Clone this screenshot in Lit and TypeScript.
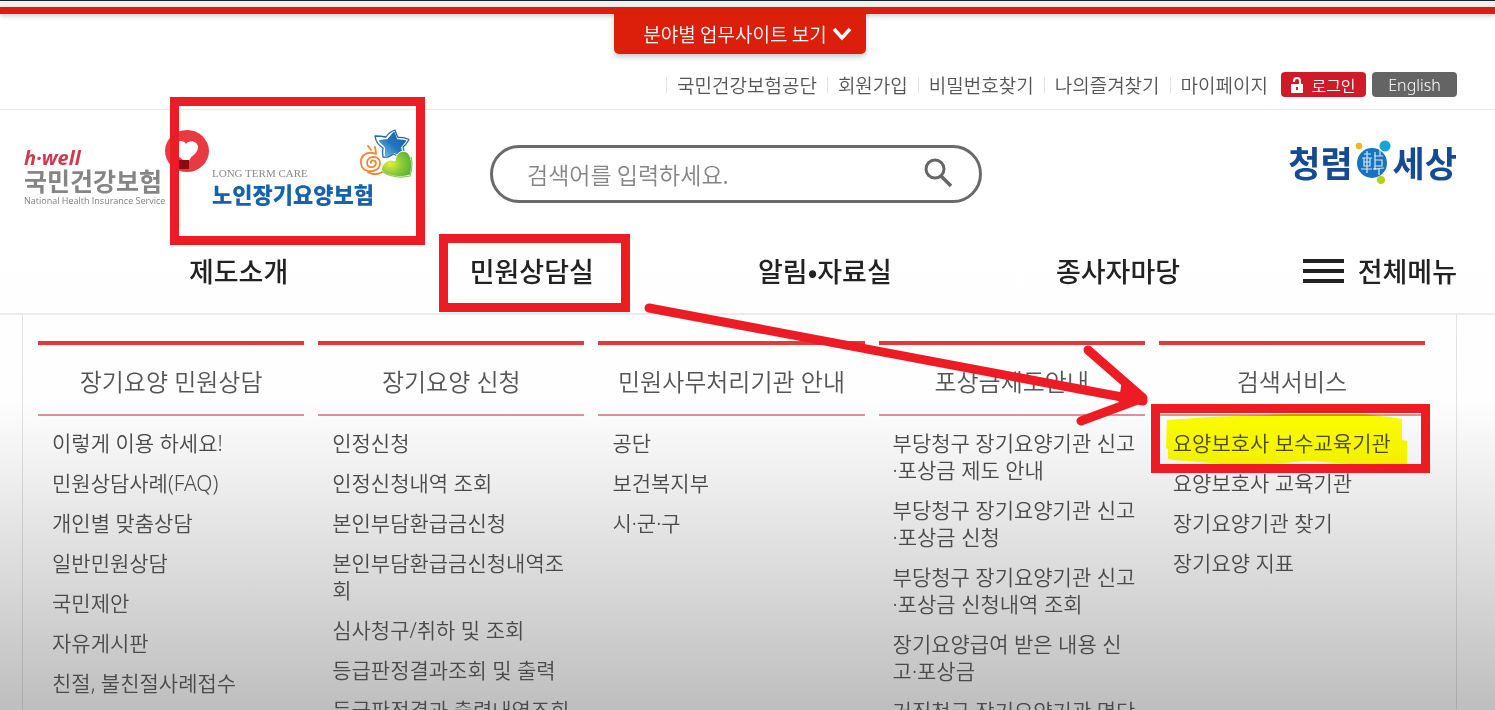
import { LitElement, html, css, svg } from "lit";
import { customElement } from "lit/decorators.js";

interface MenuColumn {
  title: string;
  items: string[];
}

const UTILITY = ["국민건강보험공단", "회원가입", "비밀번호찾기", "나의즐겨찾기", "마이페이지"];
const SECTIONS = ["제도소개", "민원상담실", "알림•자료실", "종사자마당"];
const COLUMNS: MenuColumn[] = [
  {
    title: "장기요양 민원상담",
    items: ["이렇게 이용 하세요!", "민원상담사례(FAQ)", "개인별 맞춤상담", "일반민원상담", "국민제안", "자유게시판", "친절, 불친절사례접수"],
  },
  {
    title: "장기요양 신청",
    items: ["인정신청", "인정신청내역 조회", "본인부담환급금신청", "본인부담환급금신청내역조회", "심사청구/취하 및 조회", "등급판정결과조회 및 출력", "등급판정결과 출력내역조회"],
  },
  { title: "민원사무처리기관 안내", items: ["공단", "보건복지부", "시·군·구"] },
  {
    title: "포상금제도안내",
    items: [
      "부당청구 장기요양기관 신고·포상금 제도 안내",
      "부당청구 장기요양기관 신고·포상금 신청",
      "부당청구 장기요양기관 신고·포상금 신청내역 조회",
      "장기요양급여 받은 내용 신고·포상금",
      "거짓청구 장기요양기관 명단",
    ],
  },
  {
    title: "검색서비스",
    items: ["요양보호사 보수교육기관", "요양보호사 교육기관", "장기요양기관 찾기", "장기요양 지표"],
  },
];

@customElement("brand-logos")
class BrandLogos extends LitElement {
  static styles = css`
    :host {
      display: block;
      align-self: start;
    }
    * {
      box-sizing: border-box;
    }
    .row,
    a {
      display: flex;
      align-items: flex-start;
    }
    a {
      color: inherit;
      text-decoration: none;
      white-space: nowrap;
    }
    .names {
      display: flex;
      flex-direction: column;
      width: 142px;
      padding: 22px 0 0 2px;
    }
    .hwell {
      font: italic 700 20px/18px "Open Sans", sans-serif;
      color: #cf3a4c;
    }
    .nhis {
      font-size: 25px;
      line-height: 26px;
      font-weight: 700;
      color: #858585;
    }
    .service {
      font: 9px/16px "Open Sans", sans-serif;
      color: #808080;
    }
    .heart {
      width: 46px;
      height: 44px;
      margin-top: 2px;
    }
    .care-names {
      display: flex;
      flex-direction: column;
      width: 149px;
      padding: 40px 0 0 2px;
    }
    .care-en {
      font: 11px/13px "Liberation Serif", serif;
      color: #8b8b8b;
    }
    .care-ko {
      font-size: 22px;
      line-height: 26px;
      font-weight: 900;
      color: #1763ab;
    }
    .star {
      width: 54px;
      height: 52px;
    }
  `;
  render() {
    return html`
      <div class="row">
        <a href="#">
          <span class="names">
            <span class="hwell">h·well</span>
            <span class="nhis">국민건강보험</span>
            <span class="service">National Health Insurance Service</span>
          </span>
          <svg class="heart" viewBox="0 0 46 44" aria-hidden="true">
            <ellipse cx="23" cy="22" rx="22" ry="21" fill="#ea3a41" />
            <path d="M20 32C16 28 11 26 11 18c0-7 9-8 11-3 3-5 12-3 12 3 0 7-7 8-9 14z" fill="#fff" />
            <path d="M15 31h10v9H15z" fill="#8d0a10" />
          </svg>
        </a>
        <a href="#">
          <span class="care-names">
            <span class="care-en">LONG TERM CARE</span>
            <span class="care-ko">노인장기요양보험</span>
          </span>
          <svg class="star" viewBox="0 0 54 52" aria-hidden="true">
            <defs>
              <linearGradient id="blue" x1="1" y1="0" x2="0" y2="1">
                <stop offset="0" stop-color="#1d62b0" />
                <stop offset="0.500" stop-color="#2374bf" />
                <stop offset="1" stop-color="#7cc4ee" />
              </linearGradient>
              <radialGradient id="green" cx="0.300" cy="0.500" r="0.700">
                <stop offset="0" stop-color="#e6ee3c" />
                <stop offset="0.500" stop-color="#8fcf3a" />
                <stop offset="1" stop-color="#5cb334" />
              </radialGradient>
            </defs>
            <path d="M36 3Q38 9 39 10.500 45 10 50 12.500 47 18 44 20 46 25 45 30 39 30 34 27 30 31 24 30 23 25 24 21 17 17 16 9 22 9 27 10 30 5 36 3z" fill="#fff" stroke="#2467ad" stroke-width="1.300" stroke-linejoin="round" />
            <path d="M35 6l2.500 7 8.500 1-5 6 2 8-8-3-8 4 0-9-6-6 8-1z" fill="url(#blue)" stroke="url(#blue)" stroke-width="2" stroke-linejoin="round" />
            <path d="M22 43C24 33 32 32 36 34c1-9 8-12 13-8 5 6 4 16 2 22-9 3-22 2-29-5z" fill="url(#green)" stroke="#fff" stroke-width="1" />
            <path d="M24 45c8 5 18 6 27 4 2-7 3-13 1-19" fill="none" stroke="#8cc152" stroke-width="1.200" />
            <g fill="none" stroke="#ee8633" stroke-width="1.800" stroke-linecap="round">
              <path d="M12 36c-1-3 4-4 5 0 0 5-9 6-9 0 0-8 13-8 13 0 0 9-13 11-18 4C-1 30 7 23 17 27" />
              <path d="M12 23l-3-4M17 26l-1-6M9 45c4 3 10 3 14 0" />
            </g>
          </svg>
        </a>
      </div>
    `;
  }
}

@customElement("marker-notes")
class MarkerNotes extends LitElement {
  static styles = css`
    .layer {
      position: absolute;
      top: 0;
      left: 0;
      width: 1495px;
      height: 710px;
      pointer-events: none;
    }
    .highlight {
      mix-blend-mode: multiply;
    }
  `;
  render() {
    const frames = [
      [174.5, 101.5, 246, 139],
      [443.5, 238.5, 182, 69],
      [1155.5, 408.5, 270, 60],
    ];
    return html`
      <svg class="layer" viewBox="0 0 1495 710" aria-hidden="true">
        <g fill="none" stroke="#ed1c24" stroke-width="9">
          ${frames.map(([x, y, w, h]) => svg`<rect x=${x} y=${y} width=${w} height=${h} />`)}
          <path d="M649 308L1143 401M1088 350L1143 398 1081 421" stroke-linecap="round" stroke-linejoin="round" />
          <path d="M1122 380L1140 397 1118 406z" fill="#ed1c24" stroke="none" />
        </g>
      </svg>
      <svg class="layer highlight" viewBox="0 0 1495 710" aria-hidden="true">
        <path
          d="M1167 420l42-3 84-3h70l26 3 13 2v21l5 1v25h-25l-74-5-52 4-32-1-50-4-6-1v-10l-2-1z"
          fill="#ff0"
        />
      </svg>
    `;
  }
}

@customElement("app-root")
class AppRoot extends LitElement {
  static styles = css`
    :host {
      display: block;
      position: relative;
      height: 100vh;
      overflow: hidden;
      background: linear-gradient(#fff 0, #fefefe 400px, #f0f0f0 470px, #d9d9d9 580px, #bebebe 710px);
      color: #555;
      font-family: "Noto Sans CJK KR", "Noto Sans", sans-serif;
      isolation: isolate;
    }
    * {
      box-sizing: border-box;
    }
    ul,
    h2 {
      margin: 0;
      padding: 0;
      list-style: none;
      font-weight: 350;
    }
    a {
      color: inherit;
      text-decoration: none;
    }
    button {
      border: 0;
      padding: 0;
      background: none;
      font: inherit;
      color: inherit;
      white-space: nowrap;
    }
    .topbar {
      border-top: 1px solid #22202a;
      background: #f1efef;
      padding-top: 6px;
    }
    .redline {
      height: 7px;
      background: #db1f0b;
      box-shadow: 0 2px 5px #0003;
    }
    .wrap {
      margin: 0 38px 0 22px;
    }
    .tab {
      display: flex;
      align-items: center;
      justify-content: center;
      gap: 5px;
      width: 252px;
      height: 40px;
      margin: 0 auto;
      padding-left: 16px;
      border-radius: 0 0 5px 5px;
      background: #db1f0b;
      box-shadow: 0 3px 5px #0003;
      color: #fff;
      font-size: 19px;
      font-weight: 350;
      line-height: 38px;
      position: relative;
    }
    .tab svg {
      width: 20px;
      height: 14px;
    }
    .utility {
      display: flex;
      align-items: center;
      justify-content: flex-end;
      gap: 6px;
      padding: 18px 0 12px;
    }
    .links {
      display: flex;
      margin-right: 7px;
      font-size: 19px;
      line-height: 24px;
      white-space: nowrap;
    }
    .links li {
      padding-left: 11px;
      margin-right: 10px;
      background: linear-gradient(#e3e3e3, #e3e3e3) left / 1px 16px no-repeat;
    }
    .links li:last-child {
      margin-right: 0;
    }
    .pill {
      display: flex;
      align-items: center;
      justify-content: center;
      gap: 8px;
      width: 85px;
      height: 25px;
      border-radius: 4px;
      background: #d01a28;
      color: #fff;
      font-size: 16px;
      line-height: 24px;
      font-weight: 350;
    }
    .pill svg {
      width: 12px;
      height: 16px;
    }
    .grey {
      background: #646464;
      font-family: "Noto Sans", sans-serif;
    }
    .header {
      border-top: 1px solid #e8e8e8;
      border-bottom: 2px solid #ebebeb;
      padding: 17px 0 22px;
    }
    .brand {
      display: grid;
      grid-template-columns: 468fr 492fr 475fr;
      align-items: center;
      height: 94px;
    }
    .search {
      display: flex;
      align-items: center;
      height: 58px;
      border: 3px solid #6a6a6a;
      border-radius: 29px;
      padding: 0 26px 0 34px;
    }
    .search input {
      flex: 1;
      min-width: 0;
      border: 0;
      padding: 0;
      background: none;
      outline: 0;
      font: 350 23px/34px "Noto Sans CJK KR", sans-serif;
      color: #555;
    }
    .search input::placeholder {
      color: #858585;
      opacity: 1;
    }
    .search svg {
      display: block;
      width: 30px;
      height: 32px;
    }
    .campaign {
      display: flex;
      align-items: center;
      justify-content: flex-end;
      gap: 2px;
      font-size: 35px;
      line-height: 40px;
      font-weight: 700;
      color: #164a92;
      padding-bottom: 24px;
    }
    .campaign svg {
      width: 36px;
      height: 44px;
    }
    .nav {
      display: flex;
      align-items: center;
      gap: 38px;
      height: 40px;
      margin-top: 30px;
      padding-left: 70px;
      color: #222;
      font-size: 27px;
      line-height: 40px;
      font-weight: 500;
    }
    .sections {
      flex: 1;
      display: grid;
      grid-template-columns: repeat(4, 1fr);
      text-align: center;
      font-weight: 500;
    }
    .all {
      display: flex;
      align-items: center;
      gap: 14px;
    }
    .all svg {
      width: 41px;
      height: 26px;
    }
    .panel {
      display: grid;
      grid-template-columns: repeat(5, 1fr);
      gap: 14px;
      padding: 26px 31px 0 15px;
      border: solid #0000001c;
      border-width: 0 1px;
      font-family: "Noto Sans", "Noto Sans CJK KR", sans-serif;
    }
    .panel h2 {
      height: 75px;
      padding-top: 4px;
      border-top: 4px solid #e0393e;
      border-bottom: 2px solid #dc9098;
      font-size: 24px;
      line-height: 66px;
      text-align: center;
      white-space: nowrap;
    }
    .panel ul {
      display: grid;
      gap: 13px;
      padding: 14px 6px 0 14px;
      font-size: 21px;
      line-height: 27px;
      color: #4a4a4a;
    }
    .panel li {
      word-break: break-all;
    }
  `;

  render() {
    return html`
      <div class="topbar"><div class="redline"></div></div>
      <div class="wrap">
        <button class="tab">
          분야별 업무사이트 보기
          <svg viewBox="0 0 20 14" aria-hidden="true"><path d="M2 2l8 9 8-9" fill="none" stroke="#fff" stroke-width="3.400" /></svg>
        </button>
        <div class="utility">
          <ul class="links">
            ${UTILITY.map((label) => html`<li><a href="#">${label}</a></li>`)}
          </ul>
          <button class="pill">
            <svg viewBox="0 0 12 16" aria-hidden="true">
              <path d="M3 5V4a3 3 0 0 1 6 0V8" fill="none" stroke="#fff" stroke-width="2" />
              <path d="M0 7h12v9H0zM5 10v3h2v-3z" fill="#fff" fill-rule="evenodd" />
            </svg>
            로그인
          </button>
          <button class="pill grey">English</button>
        </div>
      </div>
      <header class="header">
        <div class="wrap brand">
          <brand-logos></brand-logos>
          <form class="search" @submit=${(e: Event) => e.preventDefault()}>
            <input type="text" aria-label="검색어" placeholder="검색어를 입력하세요." />
            <button aria-label="검색">
              <svg viewBox="0 0 30 32" aria-hidden="true">
                <circle cx="12" cy="11" r="9" fill="none" stroke="#666" stroke-width="3" />
                <path d="M18 18l10 10" stroke="#666" stroke-width="3.500" />
              </svg>
            </button>
          </form>
          <a class="campaign" href="#">
            <span>청렴</span>
            <svg viewBox="0 0 36 44" aria-hidden="true">
              <circle cx="17" cy="23" r="15" fill="#1a74bd" />
              <circle cx="4" cy="6" r="3.300" fill="#f6b51b" />
              <circle cx="30" cy="6" r="5.500" fill="#17a5d8" />
              <circle cx="26" cy="40" r="4" fill="#b5d21b" />
              <path d="M9 14h7M7 18h10M9 18v8h6v-8M9 22h6M6 29h11M12 11v22M20 12v18M25 10v6M19 16h9M20 20h7v6h-7M18 29l11-1M24 28v7" fill="none" stroke="#d4eaf7" stroke-width="1.200" />
            </svg>
            <span>세상</span>
          </a>
        </div>
        <nav class="wrap nav">
          <ul class="sections">
            ${SECTIONS.map((label) => html`<li><a href="#">${label}</a></li>`)}
          </ul>
          <button class="all">
            <svg viewBox="0 0 41 26" aria-hidden="true"><path d="M0 3h41M0 13h41M0 23h41" stroke="#222" stroke-width="4" /></svg>
            전체메뉴
          </button>
        </nav>
      </header>
      <div class="wrap panel">
        ${COLUMNS.map(
          (column) => html`
            <section>
              <h2>${column.title}</h2>
              <ul>
                ${column.items.map((item) => html`<li><a href="#">${item}</a></li>`)}
              </ul>
            </section>
          `,
        )}
      </div>
      <marker-notes></marker-notes>
    `;
  }
}
